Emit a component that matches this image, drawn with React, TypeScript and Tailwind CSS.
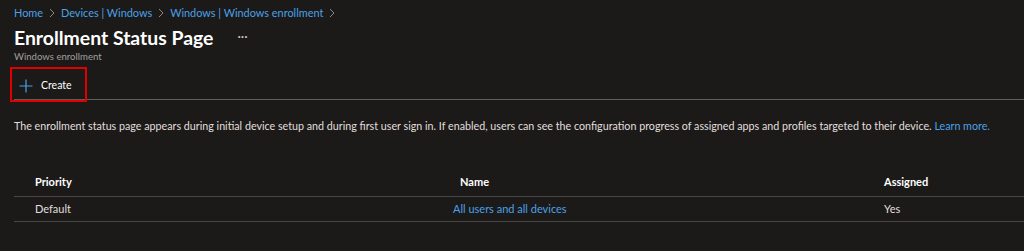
function Chevron() {
  return (
    <svg width="6" height="10" viewBox="0 0 6 10" className="text-[#8a8886]">
      <path d="M1 1L5 5L1 9" fill="none" stroke="currentColor" strokeWidth="1" />
    </svg>
  );
}

export default function App() {
  return (
    <div className="w-[1024px] h-[251px] bg-[#1b1a19] text-white font-['Lato',sans-serif] overflow-hidden">
      {/* breadcrumb */}
      <div className="flex items-center gap-[6px] pl-[14px] pt-[5px] h-[21px] text-[10.9px] text-[#4ba0e8]">
        <span>Home</span>
        <Chevron />
        <span>Devices | Windows</span>
        <Chevron />
        <span>Windows | Windows enrollment</span>
        <Chevron />
      </div>

      {/* title */}
      <div className="flex items-center pl-[14px] mt-[6px] h-[22px]">
        <h1 className="text-[19.4px] font-bold leading-none">Enrollment Status Page</h1>
        <span className="ml-[24px] text-[13px] text-[#c8c6c4] -mt-[3px]">···</span>
      </div>
      <div className="pl-[14px] text-[9.6px] text-[#a19f9d] leading-[14px] mt-[1px]">Windows enrollment</div>

      {/* command bar */}
      <div className="relative ml-[14px] mt-[3px] border-b border-[#605e5c] h-[33px] pt-[6px] flex items-center">
        <button className="flex items-center gap-[8px] pl-[5px] text-[10.5px] text-white">
          <svg width="14" height="14" viewBox="0 0 14 14" className="text-[#4ba0e8]">
            <path d="M7 0.5V13.5M0.5 7H13.5" stroke="currentColor" strokeWidth="1.2" />
          </svg>
          Create
        </button>
        <div className="absolute left-[-4px] top-0 w-[77px] h-[35px] border-2 border-[#e00000]" />
      </div>

      {/* description */}
      <p className="pl-[14px] mt-[18px] text-[10.72px] text-[#e1dfdd] leading-[16px] whitespace-nowrap">
        The enrollment status page appears during initial device setup and during first user sign in. If enabled, users can see the configuration progress of assigned apps and profiles targeted to their device.{" "}
        <span className="text-[#4ba0e8]">Learn more.</span>
      </p>

      {/* table */}
      <div className="ml-[14px] mt-[35px] text-[11px]">
        <div className="grid grid-cols-[439px_431px_1fr] h-[28px] items-center border-b border-[#484644] font-bold">
          <div className="pl-[21px]">Priority</div>
          <div className="pl-[7px]">Name</div>
          <div>Assigned</div>
        </div>
        <div className="grid grid-cols-[439px_431px_1fr] h-[25px] items-center border-b border-[#484644] text-[#e1dfdd]">
          <div className="pl-[21px]">Default</div>
          <div className="text-[#4ba0e8]">All users and all devices</div>
          <div>Yes</div>
        </div>
      </div>
    </div>
  );
}
